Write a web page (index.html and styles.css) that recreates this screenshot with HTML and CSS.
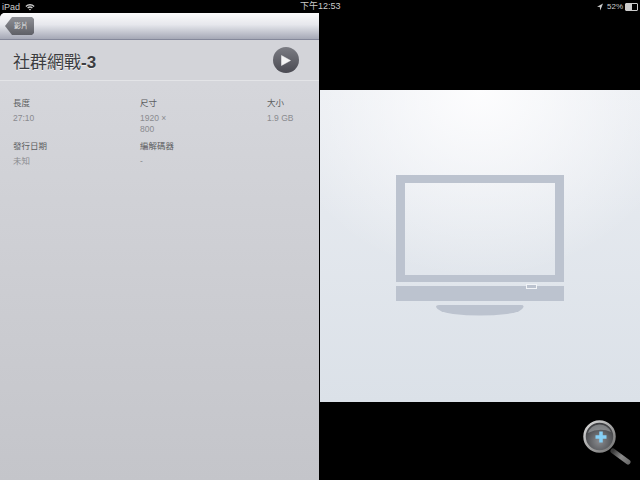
FILE: index.html
```html
<!DOCTYPE html>
<html lang="zh-Hant">
<head>
    <meta charset="UTF-8">
    <title>社群網戰-3</title>
    <link rel="stylesheet" href="styles.css">
</head>
<body>

    <div class="status-bar">
        <div class="status-left">
            <span>iPad</span>
            <svg class="wifi" width="10" height="8" viewBox="0 0 12 9">
                <path d="M0.5 3.2 A8 8 0 0 1 11.5 3.2 L10.4 4.4 A6.4 6.4 0 0 0 1.6 4.4 Z" fill="#ccc"/>
                <path d="M2.6 5.2 A5 5 0 0 1 9.4 5.2 L8.3 6.4 A3.4 3.4 0 0 0 3.7 6.4 Z" fill="#ccc"/>
                <path d="M4.6 7.2 A2.2 2.2 0 0 1 7.4 7.2 L6 8.8 Z" fill="#ccc"/>
            </svg>
        </div>
        <div class="status-time">下午12:53</div>
        <div class="status-right">
            <svg width="6" height="8" viewBox="0 0 7 8"><path d="M7 0 L0 3.6 L3.2 4 L3.8 8 Z" fill="#ccc"/></svg>
            <span class="battery-text">52%</span>
            <div class="battery"><div class="battery-level"></div></div>
        </div>
    </div>

    <div class="main">
        <div class="panel">
            <div class="nav-bar">
                <div class="back-button">影片</div>
            </div>
            <div class="title-row">
                <h1>社群網戰<b>-3</b></h1>
                <div class="play-button">
                    <svg width="10" height="11" viewBox="0 0 10 11"><path d="M0.5 0.5 L9.5 5.5 L0.5 10.5 Z" fill="#f4f4f4" stroke="#f4f4f4" stroke-width="0.5" stroke-linejoin="round"/></svg>
                </div>
            </div>
            <div class="details">
                <div class="detail">
                    <div class="label">長度</div>
                    <div class="value">27:10</div>
                </div>
                <div class="detail">
                    <div class="label">尺寸</div>
                    <div class="value">1920 ×<br>800</div>
                </div>
                <div class="detail">
                    <div class="label">大小</div>
                    <div class="value">1.9 GB</div>
                </div>
                <div class="detail">
                    <div class="label">發行日期</div>
                    <div class="value">未知</div>
                </div>
                <div class="detail">
                    <div class="label">編解碼器</div>
                    <div class="value">-</div>
                </div>
            </div>
        </div>

        <div class="preview-area">
            <div class="preview">
                <svg width="170" height="142" viewBox="0 0 170 142">
                    <path fill-rule="evenodd" d="M1 0 H169 V107 H1 Z M10 8 V100 H160 V8 Z" fill="#bcc3cf"/>
                    <rect x="1" y="111" width="168" height="15" fill="#bcc3cf"/>
                    <rect x="131.500" y="109.500" width="10" height="4" fill="#bcc3cf" stroke="#f2f4f7" stroke-width="1"/>
                    <path d="M41 132 Q41 130 44 130 H126 Q129 130 128.500 132 Q127 137 112 139 Q85 142 58 139 Q43 137 41 132 Z" fill="#bcc3cf"/>
                </svg>
            </div>
            <svg class="zoom-icon" width="54" height="48" viewBox="0 0 54 48">
                <defs>
                    <radialGradient id="lens" cx="50%" cy="65%" r="60%">
                        <stop offset="0" stop-color="#8a8c90"/>
                        <stop offset="1" stop-color="#3c3d40"/>
                    </radialGradient>
                    <linearGradient id="rim" x1="0" y1="0" x2="1" y2="1">
                        <stop offset="0" stop-color="#dcdcdc"/>
                        <stop offset="1" stop-color="#707070"/>
                    </linearGradient>
                    <linearGradient id="handle" gradientUnits="userSpaceOnUse" x1="31" y1="31" x2="47" y2="43">
                        <stop offset="0" stop-color="#3a3a3a"/>
                        <stop offset="0.500" stop-color="#8a8a8a"/>
                        <stop offset="1" stop-color="#6a6a6a"/>
                    </linearGradient>
                </defs>
                <path d="M31 31 L46 42" stroke="url(#handle)" stroke-width="5" stroke-linecap="round"/>
                <circle cx="17.500" cy="16.500" r="15" fill="url(#lens)" stroke="url(#rim)" stroke-width="2.500"/>
                <path d="M6 13 A12 11 0 0 1 29 12 Q18 7 6 13 Z" fill="#b4b7b9" opacity="0.5"/>
                <path d="M19 11.500 V22.500 M13.500 17 H24.500" stroke="#86d0f6" stroke-width="3.500"/>
            </svg>
        </div>
    </div>

</body>
</html>
```

FILE: styles.css
```css
html, body {
    margin: 0;
    height: 100%;
}

body {
    width: 640px;
    height: 480px;
    overflow: hidden;
    background-color: #000;
    font-family: "Liberation Sans", "Noto Sans CJK TC", sans-serif;
    display: flex;
    flex-direction: column;
}

.status-bar {
    height: 13px;
    display: flex;
    justify-content: space-between;
    align-items: center;
    position: relative;
    padding: 0 2px;
    color: #ccc;
    font-size: 9px;
    flex-shrink: 0;
}

.status-left {
    display: flex;
    align-items: center;
    gap: 5px;
}

.status-time {
    position: absolute;
    left: 300px;
    top: 0;
    line-height: 12px;
}

.status-right {
    display: flex;
    align-items: center;
    gap: 4px;
}

.battery-text {
    font-size: 8px;
    margin-right: -2px;
}

.battery {
    width: 11px;
    height: 6px;
    border: 1px solid #ccc;
    border-radius: 1px;
}

.battery-level {
    width: 6px;
    height: 100%;
    background-color: #ccc;
}

.main {
    flex: 1;
    display: flex;
}

.panel {
    width: 319px;
    margin-right: 1px;
    border-radius: 5px 0 0 0;
    overflow: hidden;
    background: linear-gradient(#d8d9de, #c4c5ca);
}

.nav-bar {
    height: 27px;
    padding: 4px 0 0 5px;
    box-sizing: border-box;
    background: linear-gradient(#fbfbfc, #e6e7ec 45%, #a5a8b6);
    border-bottom: 1px solid #85889a;
    display: flex;
}

.back-button {
    width: 29px;
    height: 18px;
    padding-left: 9px;
    box-sizing: border-box;
    font-size: 7px;
    line-height: 18px;
    color: #e8e8e8;
    background: linear-gradient(#8f9096, #5e5f66);
    clip-path: polygon(0 50%, 7px 0, 27px 0, 100% 2px, 100% 16px, 27px 100%, 7px 100%);
}

.title-row {
    height: 41px;
    box-sizing: border-box;
    display: flex;
    justify-content: space-between;
    align-items: center;
    padding: 0 20px 0 13px;
    border-bottom: 1px solid #e3e4e7;
    background-color: #d3d4d9;
}

h1 {
    margin: 0;
    font-size: 17px;
    font-weight: normal;
    color: #3c3d41;
    text-shadow: 0 1px 0 #eee;
}

.play-button {
    width: 26px;
    height: 26px;
    border-radius: 50%;
    background: linear-gradient(#7b7c83, #4a4a52);
    display: flex;
    align-items: center;
    justify-content: center;
}

.details {
    display: grid;
    grid-template-columns: 127px 127px 1fr;
    padding: 17px 0 0 13px;
    row-gap: 6px;
}

.label {
    font-size: 8.500px;
    line-height: 11px;
    color: #5c5d60;
    margin-bottom: 4px;
}

.value {
    font-size: 8.500px;
    line-height: 11px;
    color: #8a8b8f;
}

.preview-area {
    flex: 1;
    position: relative;
    display: flex;
    align-items: flex-start;
}

.preview {
    width: 320px;
    height: 312px;
    margin-top: 77px;
    display: flex;
    align-items: center;
    justify-content: center;
    background: radial-gradient(ellipse 65% 60% at 50% 0, #fdfdfe, rgba(253, 253, 254, 0)), linear-gradient(#eaedf2, #dbe1e8);
}

.zoom-icon {
    position: absolute;
    left: 262px;
    top: 407px;
}
```
